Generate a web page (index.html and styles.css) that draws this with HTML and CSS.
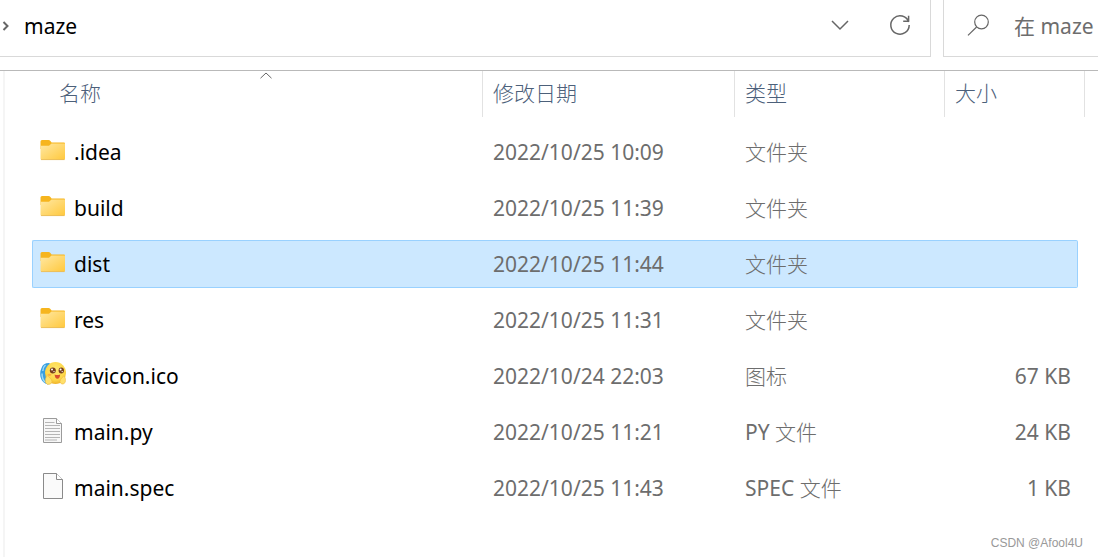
FILE: index.html
```html
<!DOCTYPE html>
<html lang="zh-CN">
  <head>
    <meta charset="UTF-8" />
    <meta name="viewport" content="width=device-width, initial-scale=1.0" />
    <title>maze</title>
    <link rel="stylesheet" href="styles.css">
  </head>
  <body>
    <svg class="defs" width="0" height="0" aria-hidden="true">
      <defs>
        <linearGradient id="folderFill" x1="0" y1="0" x2="1" y2="1">
          <stop offset="0" stop-color="#ffe8a3" />
          <stop offset="1" stop-color="#ffc83c" />
        </linearGradient>
        <radialGradient id="faceFill" cx="0.5" cy="0.35" r="0.65">
          <stop offset="0" stop-color="#ffe873" />
          <stop offset="0.7" stop-color="#fdd748" />
          <stop offset="1" stop-color="#f0b32c" />
        </radialGradient>
        <symbol id="folder" viewBox="0 0 26 26">
          <path d="M0.5 4.5Q0.5 3 2 3H8.5Q9.7 3 10.4 4L11.6 5.6H24Q25 5.6 25 6.6V12H0.5Z" fill="#f6b51e" />
          <path d="M0.5 8.8H9L11.5 6.6H25V21.5Q25 23 23.5 23H2Q0.5 23 0.5 21.5Z" fill="url(#folderFill)" />
          <path d="M1 22.6H24.5" stroke="#e6b95c" stroke-width="0.8" />
        </symbol>
      </defs>
    </svg>

    <header class="toolbar">
      <nav class="address">
        <svg class="crumb-arrow" width="8" height="12" viewBox="0 0 8 12"><path d="M1.5 2L5.5 6L1.5 10" /></svg>
        <a class="crumb" href="#">maze</a>
        <button class="icon-button" aria-label="历史记录">
          <svg width="20" height="20" viewBox="0 0 20 20"><path d="M2 6L10 14L18 6" /></svg>
        </button>
        <button class="icon-button" aria-label="刷新">
          <svg width="24" height="24" viewBox="0 0 24 24"><path d="M20.7 9A9.2 9.2 0 1 0 21.2 12M20.6 2.8V8.2H15.2" /></svg>
        </button>
      </nav>
      <label class="search">
        <svg width="24" height="24" viewBox="0 0 24 24"><circle cx="14.5" cy="9" r="6.8" /><path d="M9.6 14L1 22.4" /></svg>
        <input type="text" placeholder="在 maze" aria-label="搜索" />
      </label>
    </header>

    <main class="files">
      <svg class="sort-mark" width="12" height="7" viewBox="0 0 12 7"><path d="M0.5 6.2L6 1L11.5 6.2" /></svg>
      <table class="file-table">
        <thead>
          <tr>
            <th class="col-name"><button>名称</button></th>
            <th class="col-date"><button>修改日期</button></th>
            <th class="col-type"><button>类型</button></th>
            <th class="col-size"><button>大小</button></th>
          </tr>
        </thead>
        <tbody>
          <tr>
            <td><div class="name"><svg class="icon"><use href="#folder" /></svg>.idea</div></td>
            <td>2022/10/25 10:09</td>
            <td class="type">文件夹</td>
            <td></td>
          </tr>
          <tr>
            <td><div class="name"><svg class="icon"><use href="#folder" /></svg>build</div></td>
            <td>2022/10/25 11:39</td>
            <td class="type">文件夹</td>
            <td></td>
          </tr>
          <tr class="selected">
            <td><div class="name"><svg class="icon"><use href="#folder" /></svg>dist</div></td>
            <td>2022/10/25 11:44</td>
            <td class="type">文件夹</td>
            <td></td>
          </tr>
          <tr>
            <td><div class="name"><svg class="icon"><use href="#folder" /></svg>res</div></td>
            <td>2022/10/25 11:31</td>
            <td class="type">文件夹</td>
            <td></td>
          </tr>
          <tr>
            <td>
              <div class="name">
                <svg class="icon" viewBox="0 0 26 26">
                  <path d="M9 2Q3 2 1.5 7Q-0.5 11 0.5 16Q2 22 8 23.5L12 20V4Z" fill="#389fe0" />
                  <path d="M5.5 4Q3 6 2.8 10M2 12.5Q2 18 5 21" fill="none" stroke="#9bd8f7" stroke-width="1.5" />
                  <ellipse cx="15.5" cy="12" rx="10.5" ry="11" fill="url(#faceFill)" />
                  <ellipse cx="12.8" cy="9.6" rx="3" ry="3" fill="#79401c" />
                  <ellipse cx="21.3" cy="9.6" rx="2.7" ry="3" fill="#79401c" />
                  <circle cx="12" cy="8.6" r="1" fill="#fff" />
                  <circle cx="20.6" cy="8.6" r="1" fill="#fff" />
                  <circle cx="14" cy="10.6" r="0.7" fill="#fff" />
                  <circle cx="22.2" cy="10.6" r="0.7" fill="#fff" />
                  <ellipse cx="9.5" cy="13.8" rx="2" ry="1.1" fill="#fbb03f" />
                  <path d="M14.6 13.6Q17.4 14.6 20.2 13.6Q19.8 17.8 17.4 17.8Q15 17.8 14.6 13.6Z" fill="#d8502d" />
                  <path d="M6.5 15.5Q7.5 13.8 8.8 16L11.2 18Q13 21 10.5 23Q7 24.5 5.5 21.5Q4.6 18 6.5 15.5Z" fill="#ffe06a" stroke="#f0b840" stroke-width="0.6" />
                  <path d="M24.6 15.5Q23.4 14 22.6 16.4L20.6 18.3Q19 21 21.3 22.8Q24 24 25.3 21Q26 18 24.6 15.5Z" fill="#ffe06a" stroke="#f0b840" stroke-width="0.6" />
                </svg>favicon.ico
              </div>
            </td>
            <td>2022/10/24 22:03</td>
            <td class="type">图标</td>
            <td>67 KB</td>
          </tr>
          <tr>
            <td>
              <div class="name">
                <svg class="icon" viewBox="0 0 26 26">
                  <path d="M3.5 1.5H16.5L21.5 6.5V25.5H3.5Z" fill="#f7f7f7" stroke="#9b9b9b" />
                  <path d="M16.5 1.5V6.5H21.5" fill="#fff" stroke="#9b9b9b" />
                  <path d="M5 5.5H14.5M5 8.5H20M5 11.5H20M5 14.5H20M5 17.5H20M5 20.5H20M5 23H17" stroke="#b5b5b5" />
                </svg>main.py
              </div>
            </td>
            <td>2022/10/25 11:21</td>
            <td>PY <span class="type">文件</span></td>
            <td>24 KB</td>
          </tr>
          <tr>
            <td>
              <div class="name">
                <svg class="icon" viewBox="0 0 26 26">
                  <path d="M3.5 0.5H16.5L22.5 6.5V25.5H3.5Z" fill="#fafafa" stroke="#8a8a8a" />
                  <path d="M16.5 0.5V6.5H22.5" fill="#fff" stroke="#8a8a8a" />
                </svg>main.spec
              </div>
            </td>
            <td>2022/10/25 11:43</td>
            <td>SPEC <span class="type">文件</span></td>
            <td>1 KB</td>
          </tr>
        </tbody>
      </table>
    </main>
    <footer class="credit">CSDN @Afool4U</footer>
  </body>
</html>
```
FILE: styles.css
```css
* {
  box-sizing: border-box;
}

body {
  margin: 0;
  min-height: 100vh;
  display: flex;
  flex-direction: column;
  background: #fff;
  color: #000;
  font-family: "Noto Sans", "Noto Sans CJK SC", sans-serif;
  font-size: 21px;
  line-height: 28px;
  overflow-x: hidden;
}

button,
input {
  font: inherit;
  border: none;
  background: none;
  padding: 0;
}

svg {
  flex: none;
}

.defs {
  position: absolute;
}

/* address bar and search */
.toolbar {
  display: flex;
  gap: 12px;
  height: 57px;
}

.toolbar svg,
.sort-mark {
  fill: none;
  stroke: #666;
  stroke-width: 1.5;
}

.address,
.search {
  display: flex;
  align-items: center;
  border-bottom: 1px solid #d9d9d9;
  padding-bottom: 4px;
}

.address {
  flex: 1;
  border-right: 1px solid #d9d9d9;
}

.address .crumb-arrow {
  margin: 0 14px 0 2px;
  stroke-width: 2;
}

.crumb {
  flex: 1;
  color: #000;
  text-decoration: none;
}

.icon-button {
  display: flex;
  align-items: center;
  justify-content: center;
  width: 60px;
  height: 50px;
  padding-bottom: 2px;
}

.search {
  width: 155px;
  border-left: 1px solid #d9d9d9;
  padding-left: 23px;
  gap: 23px;
}

.search svg {
  stroke-width: 1.2;
  margin-bottom: 2px;
}

.search input {
  flex: 1;
  min-width: 0;
  outline: none;
}

.search input::placeholder {
  color: #6d6d6d;
  opacity: 1;
}

/* file list */
.files {
  position: relative;
  flex: 1;
  margin-top: 13px;
  border-top: 1px solid #b9b9b9;
  padding: 0 20px 0 32px;
}

.files::before {
  content: "";
  position: absolute;
  left: 3px;
  top: 0;
  bottom: 0;
  width: 2px;
  background: #f5f5f5;
}

.sort-mark {
  position: absolute;
  left: 260px;
  top: 1px;
  stroke-width: 1;
}

.file-table {
  width: 100%;
  table-layout: fixed;
  border-spacing: 0 8px;
  margin-top: -8px;
}

th {
  height: 49px;
  padding: 0;
  vertical-align: top;
  font-weight: 300;
}

th button {
  display: block;
  width: 100%;
  height: 46px;
  padding: 0 0 2px 10px;
  border-right: 1px solid #e2e2e2;
  color: #4c607a;
  text-align: left;
}

.col-name button {
  padding-left: 27px;
}

.col-date {
  width: 252px;
}

.col-type {
  width: 210px;
}

.col-size {
  width: 133px;
}

.col-size button {
  width: 140px;
}

td {
  height: 48px;
  padding: 0 0 0 10px;
  border: 1px solid transparent;
  border-width: 1px 0;
  color: #6d6d6d;
  white-space: nowrap;
}

td:first-child {
  padding-left: 7px;
  border-left-width: 1px;
  border-radius: 2px 0 0 2px;
  color: #000;
}

td:last-child {
  padding: 0 6px 0 0;
  border-right-width: 1px;
  border-radius: 0 2px 2px 0;
  text-align: right;
}

.type {
  font-weight: 300;
}

.selected td {
  background: #cce8ff;
  border-color: #99d1ff;
}

.name {
  display: flex;
  align-items: center;
  gap: 8px;
}

.icon {
  width: 26px;
  height: 26px;
  margin-bottom: 4px;
}

.credit {
  position: absolute;
  right: 15px;
  bottom: 5px;
  color: #999;
  font: 12px/18px "Liberation Sans", Arial, sans-serif;
}
```
